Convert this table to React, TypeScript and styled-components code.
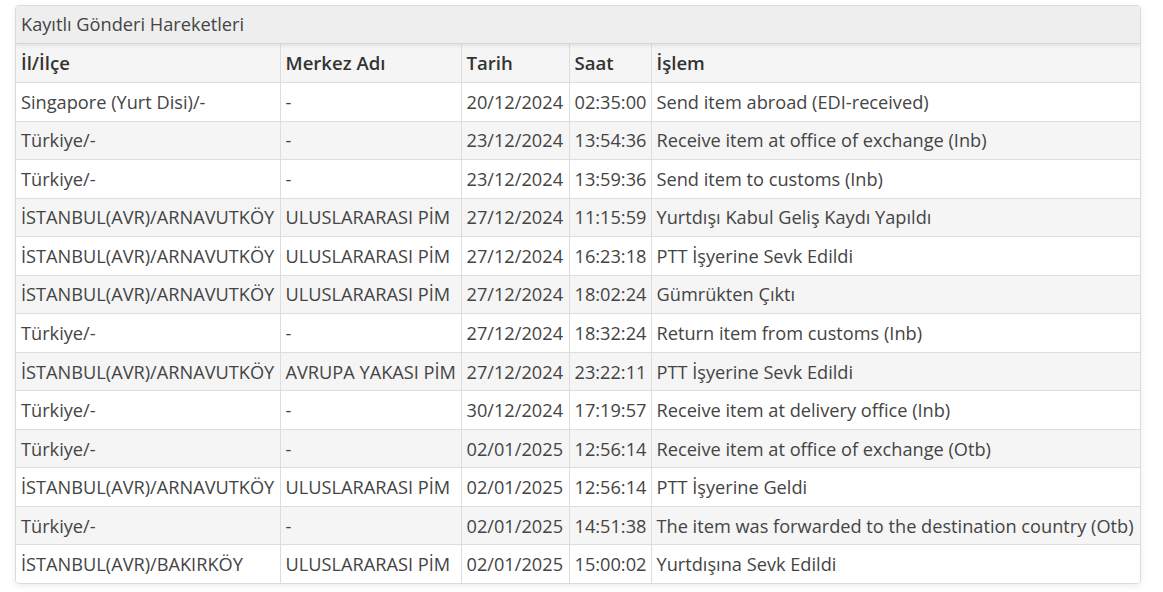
import React from 'react';
import styled, { createGlobalStyle } from 'styled-components';

type Movement = {
  place: string;
  center: string;
  date: string;
  time: string;
  action: string;
};

const movements: Movement[] = [
  { place: 'Singapore (Yurt Disi)/-', center: '-', date: '20/12/2024', time: '02:35:00', action: 'Send item abroad (EDI-received)' },
  { place: 'Türkiye/-', center: '-', date: '23/12/2024', time: '13:54:36', action: 'Receive item at office of exchange (Inb)' },
  { place: 'Türkiye/-', center: '-', date: '23/12/2024', time: '13:59:36', action: 'Send item to customs (Inb)' },
  { place: 'İSTANBUL(AVR)/ARNAVUTKÖY', center: 'ULUSLARARASI PİM', date: '27/12/2024', time: '11:15:59', action: 'Yurtdışı Kabul Geliş Kaydı Yapıldı' },
  { place: 'İSTANBUL(AVR)/ARNAVUTKÖY', center: 'ULUSLARARASI PİM', date: '27/12/2024', time: '16:23:18', action: 'PTT İşyerine Sevk Edildi' },
  { place: 'İSTANBUL(AVR)/ARNAVUTKÖY', center: 'ULUSLARARASI PİM', date: '27/12/2024', time: '18:02:24', action: 'Gümrükten Çıktı' },
  { place: 'Türkiye/-', center: '-', date: '27/12/2024', time: '18:32:24', action: 'Return item from customs (Inb)' },
  { place: 'İSTANBUL(AVR)/ARNAVUTKÖY', center: 'AVRUPA YAKASI PİM', date: '27/12/2024', time: '23:22:11', action: 'PTT İşyerine Sevk Edildi' },
  { place: 'Türkiye/-', center: '-', date: '30/12/2024', time: '17:19:57', action: 'Receive item at delivery office (Inb)' },
  { place: 'Türkiye/-', center: '-', date: '02/01/2025', time: '12:56:14', action: 'Receive item at office of exchange (Otb)' },
  { place: 'İSTANBUL(AVR)/ARNAVUTKÖY', center: 'ULUSLARARASI PİM', date: '02/01/2025', time: '12:56:14', action: 'PTT İşyerine Geldi' },
  { place: 'Türkiye/-', center: '-', date: '02/01/2025', time: '14:51:38', action: 'The item was forwarded to the destination country (Otb)' },
  { place: 'İSTANBUL(AVR)/BAKIRKÖY', center: 'ULUSLARARASI PİM', date: '02/01/2025', time: '15:00:02', action: 'Yurtdışına Sevk Edildi' },
];

const colWidths = [264, 181, 108, 82, 489];

const GlobalStyle = createGlobalStyle`
  body {
    margin: 0;
    background: #fff;
    font-family: "Open Sans", "Noto Sans", sans-serif;
    color: #333;
  }
`;

export default () => {
  return <Page>
    <GlobalStyle />
    <Panel>
      <PanelHeading>Kayıtlı Gönderi Hareketleri</PanelHeading>
      <Table>
        <colgroup>
          {colWidths.map((w, i) => <col key={i} style={{ width: w }} />)}
        </colgroup>
        <thead>
          <Row $striped>
            <HeadCell>İl/İlçe</HeadCell>
            <HeadCell>Merkez Adı</HeadCell>
            <HeadCell>Tarih</HeadCell>
            <HeadCell>Saat</HeadCell>
            <HeadCell>İşlem</HeadCell>
          </Row>
        </thead>
        <tbody>
          {movements.map((m, i) => (
            <Row key={i} $striped={i % 2 === 1}>
              <Cell>{m.place}</Cell>
              <Cell>{m.center}</Cell>
              <Cell>{m.date}</Cell>
              <Cell>{m.time}</Cell>
              <Cell>{m.action}</Cell>
            </Row>
          ))}
        </tbody>
      </Table>
    </Panel>
  </Page>;
}

const Page = styled.div`
  padding: 5px 24px 8px 15px;
`;

const Panel = styled.div`
  width: 1124px;
  border: 1px solid #dcdcdc;
  border-radius: 4px;
  background: #fff;
  box-shadow: 0 2px 6px rgba(0, 0, 0, 0.08);
  overflow: hidden;
`;

const PanelHeading = styled.div`
  height: 37px;
  line-height: 37px;
  padding: 0 5px;
  background: #eeeeee;
  border-bottom: 1px solid #d6d6d6;
  box-shadow: 0 2px 4px rgba(0, 0, 0, 0.08);
  position: relative;
  font-size: 18.2px;
  color: #444;
`;

const Table = styled.table`
  width: 100%;
  border-collapse: collapse;
  table-layout: fixed;
  font-size: 18.2px;
`;

const Row = styled.tr<{ $striped?: boolean }>`
  height: 38.54px;
  background: ${p => p.$striped ? '#f5f5f5' : '#fff'};
`;

const HeadCell = styled.th`
  padding: 0 5px 1px;
  text-align: left;
  font-size: 18.6px;
  font-weight: 600;
  color: #333;
  border-left: 1px solid #dddddd;
  white-space: nowrap;
  &:first-child { border-left: none; }
`;

const Cell = styled.td`
  padding: 0 5px;
  color: #444;
  border-top: 1px solid #dddddd;
  border-left: 1px solid #dddddd;
  white-space: nowrap;
  &:first-child { border-left: none; }
`;
